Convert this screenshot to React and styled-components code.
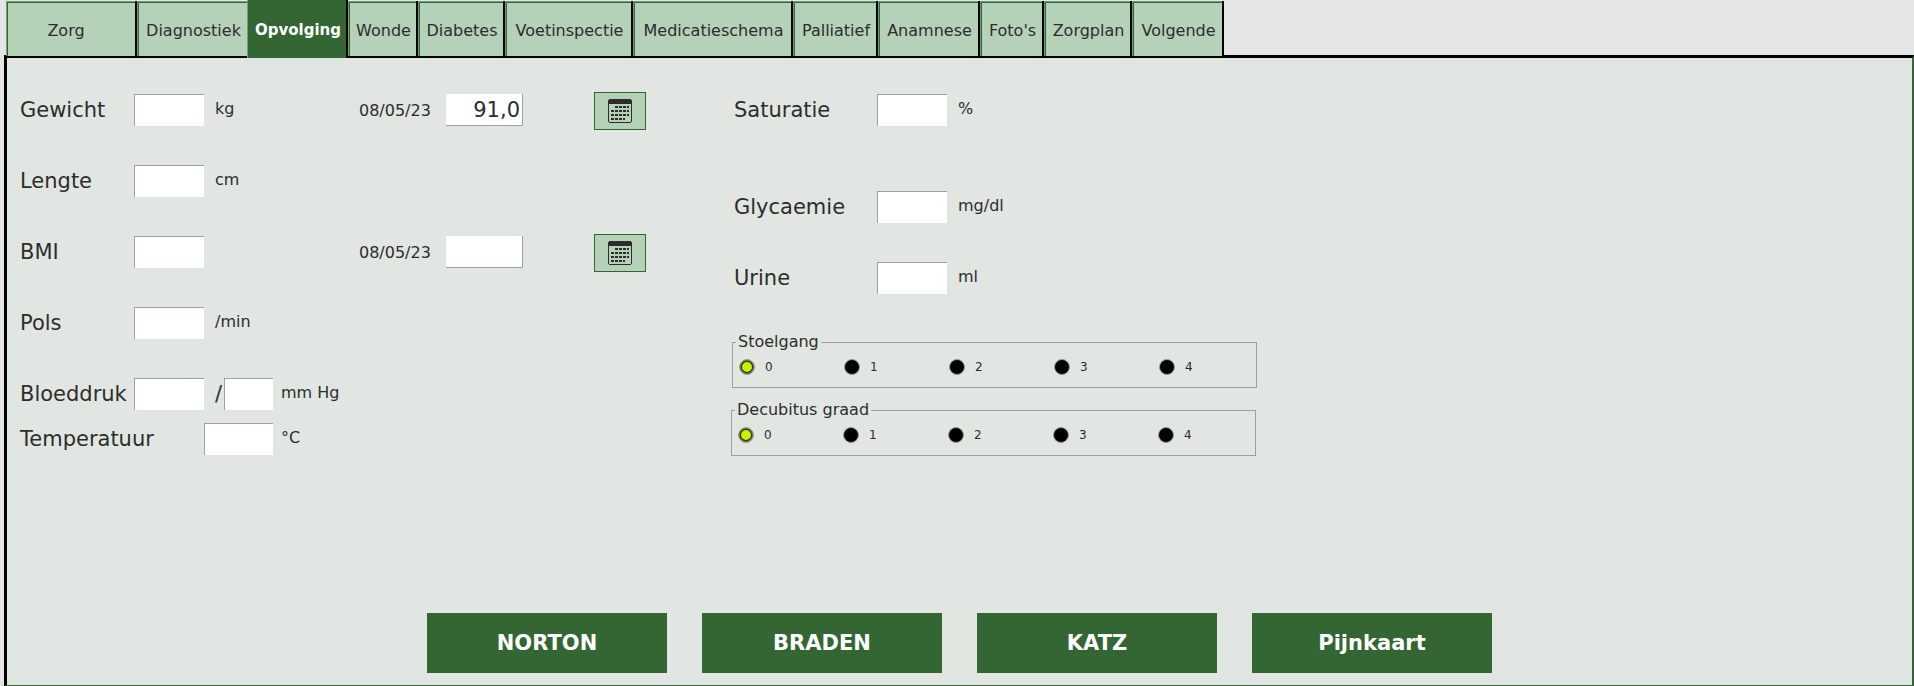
import React, { useState } from 'react'
import styled, { createGlobalStyle, css } from 'styled-components'

const GlobalStyle = createGlobalStyle`
  * {
    box-sizing: border-box;
  }
  body {
    margin: 0;
    background-color: #e5e5e5;
    color: #2d2d2d;
    font-family: 'DejaVu Sans', Verdana, sans-serif;
    font-size: 16px;
  }
  button, input {
    font-family: inherit;
    color: inherit;
  }
`
const Page = styled.div`
  display: flex;
  flex-direction: column;
  min-height: 100vh;
  padding-left: 4px;
`
const TabBar = styled.nav`
  display: flex;
  height: 55px;
  padding-left: 2px;
`
const Tab = styled.button`
  flex-shrink: 0;
  width: ${props => props.$width}px;
  height: 55px;
  margin-top: 1px;
  padding: 4px ${props => props.$inset || 0}px 0 3px;
  border: 0 solid #000;
  border-right-width: 2px;
  background-color: #b5d1b8;
  box-shadow: inset 1px 1px #6fa172, inset 2px 2px #336633;
  font-size: 16px;
  line-height: 20px;
  white-space: nowrap;
  z-index: 1;
  ${props => props.$active && css`
    height: 58px;
    margin-top: 0;
    margin-left: -2px;
    padding-top: 2px;
    background-color: #336633;
    box-shadow: inset 1px 0 #6fa172;
    color: white;
    font-size: 15px;
    font-weight: bold;
  `}
`
const Panel = styled.main`
  flex: 1;
  display: flex;
  flex-direction: column;
  justify-content: space-between;
  padding: 36px 0 12px;
  border: solid #336633;
  border-width: 3px 2px 1px 3px;
  border-top-color: #000;
  border-left-color: #000;
  background-color: #e1e6e2;
`
const Columns = styled.div`
  display: flex;
  padding-left: 13px;
`
const LeftColumn = styled.div`
  width: 711px;
`
const RightColumn = styled.div`
  width: 526px;
`
const Row = styled.div`
  display: flex;
  align-items: center;
  height: 32px;
  margin-bottom: ${props => props.$space || 39}px;
  ${RightColumn} & {
    padding-left: 3px;
  }
`
const Fields = styled.div`
  display: flex;
  align-items: center;
  width: 339px;
`
const Label = styled.label`
  width: ${props => props.$width || 114}px;
  font-size: 21px;
  line-height: 32px;
`
const Field = styled.input`
  width: ${props => props.$width || 70}px;
  height: 32px;
  padding: 0 2px;
  border: 0 solid #a0a0a0;
  border-width: 1px 0 0 1px;
  border-radius: 0;
  background-color: white;
  font-size: 21px;
`
const LastValue = styled(Field)`
  border-width: 0 1px 1px 0;
  text-align: right;
`
const Unit = styled.span`
  padding: 0 0 2px ${props => props.$gap || 11}px;
  line-height: 20px;
`
const Slash = styled.span`
  width: 20px;
  padding-left: 11px;
  font-size: 21px;
`
const DateText = styled.time`
  width: 87px;
`
const CalendarButton = styled.button`
  display: flex;
  align-items: center;
  justify-content: center;
  width: 52px;
  height: 38px;
  margin: 2px 0 0 71px;
  padding: 0;
  border: 1px solid #336633;
  background-color: #b5d1b8;
`
const RadioGroup = styled.fieldset`
  display: flex;
  width: 525px;
  height: 56px;
  margin: 0 0 12px ${props => props.$indent || 0}px;
  padding: 5px 0 0 6px;
  border: 1px solid #a0a0a0;
`
const Legend = styled.legend`
  margin-left: -3px;
  padding: 0 2px;
  line-height: 20px;
`
const RadioLabel = styled.label`
  display: flex;
  align-items: center;
  gap: 10px;
  width: 105px;
  height: 20px;
  font-size: 12px;
  &:last-child {
    width: auto;
  }
`
const Radio = styled.input`
  appearance: none;
  width: 16px;
  height: 16px;
  margin: 0;
  border: 1px solid #9a9d90;
  border-radius: 50%;
  background-color: #000;
  &:checked {
    background-color: #c8f000;
    box-shadow: inset 0 0 0 1px #6c7060, inset 0 0 0 2px #2b3010;
  }
`
const Actions = styled.div`
  display: flex;
  justify-content: center;
  gap: 35px;
`
const ActionButton = styled.button`
  width: 240px;
  height: 60px;
  border: none;
  background-color: #336633;
  color: white;
  font-size: 21px;
  font-weight: bold;
`

const tabs = [
  { name: 'Zorg', width: 131, inset: 12 },
  { name: 'Diagnostiek', width: 112 },
  { name: 'Opvolging', width: 101 },
  { name: 'Wonde', width: 70 },
  { name: 'Diabetes', width: 87 },
  { name: 'Voetinspectie', width: 128 },
  { name: 'Medicatieschema', width: 160 },
  { name: 'Palliatief', width: 85 },
  { name: 'Anamnese', width: 102 },
  { name: "Foto's", width: 64 },
  { name: 'Zorgplan', width: 88 },
  { name: 'Volgende', width: 92 },
]

const CalendarIcon = () => (
  <svg width="24" height="24" viewBox="0 0 24 24" aria-hidden="true">
    <path fill="#2d2d2d" d="M1 0h22v1h1v22h-1v1H1v-1H0V1h1zM1 5v18h22V5z" fillRule="evenodd" />
    <path
      stroke="#2d2d2d"
      strokeWidth="2"
      strokeDasharray="3 1"
      d="M7 8h14M3 12h18M3 16h18M3 20h14"
    />
  </svg>
)

const Measure = ({ id, label, unit, children }) => (
  <Fields>
    <Label htmlFor={id}>{label}</Label>
    <Field id={id} />
    {unit && <Unit>{unit}</Unit>}
    {children}
  </Fields>
)

const History = ({ label, date, value }) => (
  <>
    <DateText>{date}</DateText>
    <LastValue $width={77} defaultValue={value} aria-label={`${label} ${date}`} />
    <CalendarButton type="button" aria-label={`Historiek ${label}`}>
      <CalendarIcon />
    </CalendarButton>
  </>
)

const Scale = ({ name, title, indent }) => (
  <RadioGroup $indent={indent}>
    <Legend>{title}</Legend>
    {[0, 1, 2, 3, 4].map(n => (
      <RadioLabel key={n}>
        <Radio type="radio" name={name} value={n} defaultChecked={n === 0} />
        {n}
      </RadioLabel>
    ))}
  </RadioGroup>
)

const App = () => {
  const [active, setActive] = useState('Opvolging')
  return (
    <Page>
      <GlobalStyle />
      <TabBar>
        {tabs.map(({ name, width, inset }) => (
          <Tab
            key={name}
            type="button"
            $width={width}
            $inset={inset}
            $active={name === active}
            onClick={() => setActive(name)}
          >
            {name}
          </Tab>
        ))}
      </TabBar>
      <Panel>
        <Columns>
          <LeftColumn>
            <Row>
              <Measure id="gewicht" label="Gewicht" unit="kg" />
              <History label="Gewicht" date="08/05/23" value="91,0" />
            </Row>
            <Row>
              <Measure id="lengte" label="Lengte" unit="cm" />
            </Row>
            <Row>
              <Measure id="bmi" label="BMI" />
              <History label="BMI" date="08/05/23" value="" />
            </Row>
            <Row>
              <Measure id="pols" label="Pols" unit="/min" />
            </Row>
            <Row $space={13}>
              <Measure id="bloeddruk" label="Bloeddruk">
                <Slash>/</Slash>
                <Field $width={49} aria-label="Bloeddruk onderdruk" />
                <Unit $gap={8}>mm Hg</Unit>
              </Measure>
            </Row>
            <Row>
              <Label htmlFor="temperatuur" $width={184}>Temperatuur</Label>
              <Field id="temperatuur" $width={69} />
              <Unit $gap={8}>°C</Unit>
            </Row>
          </LeftColumn>
          <RightColumn>
            <Row $space={65}>
              <Label htmlFor="saturatie" $width={143}>Saturatie</Label>
              <Field id="saturatie" />
              <Unit>%</Unit>
            </Row>
            <Row>
              <Label htmlFor="glycaemie" $width={143}>Glycaemie</Label>
              <Field id="glycaemie" />
              <Unit>mg/dl</Unit>
            </Row>
            <Row $space={38}>
              <Label htmlFor="urine" $width={143}>Urine</Label>
              <Field id="urine" />
              <Unit>ml</Unit>
            </Row>
            <Scale name="stoelgang" title="Stoelgang" indent={1} />
            <Scale name="decubitus" title="Decubitus graad" />
          </RightColumn>
        </Columns>
        <Actions>
          <ActionButton type="button">NORTON</ActionButton>
          <ActionButton type="button">BRADEN</ActionButton>
          <ActionButton type="button">KATZ</ActionButton>
          <ActionButton type="button">Pijnkaart</ActionButton>
        </Actions>
      </Panel>
    </Page>
  )
}

export default App
